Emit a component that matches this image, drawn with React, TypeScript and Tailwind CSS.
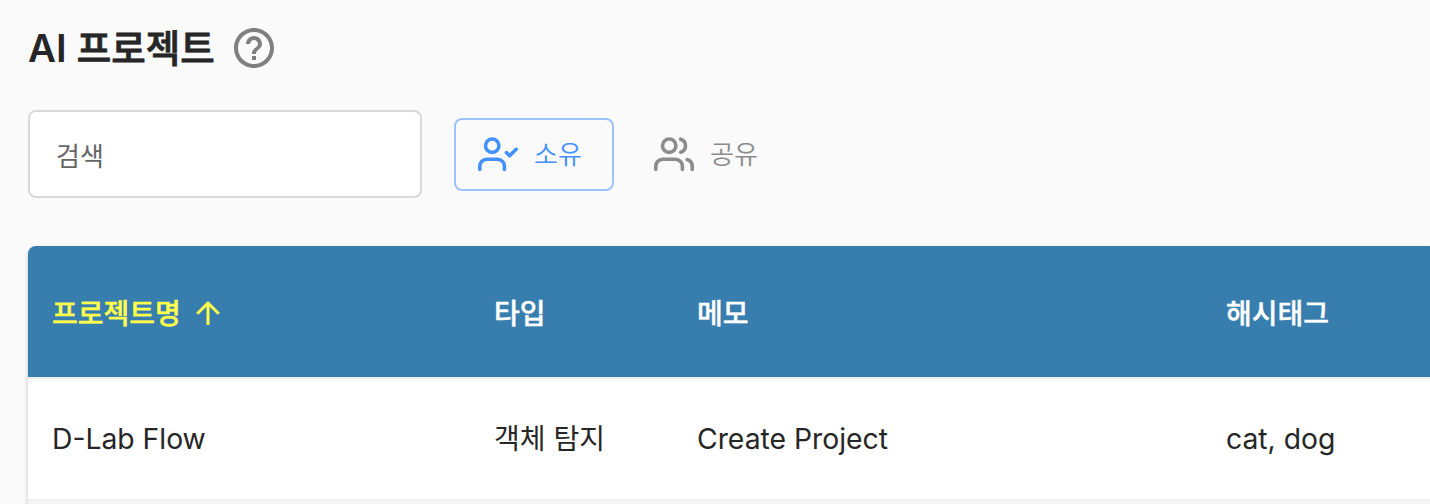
import { MdHelpOutline } from "react-icons/md";

function PersonCheck() {
  return (
    <svg width="40" height="36" viewBox="0 0 40 36" fill="none" stroke="currentColor" strokeWidth="3.6" strokeLinecap="round" strokeLinejoin="round">
      <circle cx="14.2" cy="9.7" r="6.7" />
      <path d="M1.8 33.5v-3.2a7 7 0 0 1 7-7h10.6a7 7 0 0 1 7 7v3.2M28.4 16.6l3.2 3.2 6.6-6.5" />
    </svg>
  );
}

function People() {
  return (
    <svg width="40" height="36" viewBox="0 0 40 36" fill="none" stroke="currentColor" strokeWidth="3.6" strokeLinecap="round" strokeLinejoin="round">
      <circle cx="15.2" cy="9.7" r="6.7" />
      <path d="M1.8 33.5v-3.2a7 7 0 0 1 7-7h12.6a7 7 0 0 1 7 7v3.2M26.7 3.2a6.8 6.8 0 0 1 0 13M38.2 33.5v-3.2a7 7 0 0 0-5-6.8" />
    </svg>
  );
}

function SortArrow() {
  return (
    <svg className="mb-0.5" width="24" height="26" viewBox="0 0 24 26" fill="none" stroke="currentColor" strokeWidth="3">
      <path d="M12 25V3M1.2 13.8 12 3l10.8 10.8" />
    </svg>
  );
}

const columns = "grid grid-cols-[442px_203px_529px_1fr] items-center pl-6";

export default function App() {
  return (
    <div className="h-[504px] w-full overflow-hidden bg-[#fafafa] font-[Inter,'Noto_Sans_CJK_KR',sans-serif] text-[#262626]">
      <header className="flex h-[110px] items-start pl-7 pt-6">
        <h1 className="w-[202px] whitespace-nowrap text-[37.5px] font-medium leading-[49px] [-webkit-text-stroke:0.8px_currentColor]"><span className="text-[38.5px] font-semibold [-webkit-text-stroke:0px]">AI</span> 프로젝트</h1>
        <MdHelpOutline className="size-12 text-[#808080]" />
      </header>
      <div className="flex h-22 items-center pl-7">
        <div className="flex h-22 w-[394px] items-center rounded-lg border-2 border-[#d9d9d9] bg-white pl-[26px] pt-1 text-[26px] text-[#666]">검색</div>
        <button className="ml-8 flex h-[73px] w-40 items-center gap-4 rounded-lg border-2 border-[#9dc3fc] pl-[22px] text-[26px] font-[350] text-[#4391fc]"><PersonCheck />소유</button>
        <button className="ml-10 flex items-center gap-4 text-[26px] font-[350] text-[#8c8c8c]"><People />공유</button>
      </div>
      <main className="ml-7 mt-12 h-[300px] rounded-tl-lg bg-[#f4f4f4] shadow-[0_2px_4px_rgba(0,0,0,0.22)]">
        <div className={columns + " h-[131px] rounded-tl-lg bg-[#377dae] pt-1 text-[28px] font-medium text-white [-webkit-text-stroke:0.4px_currentColor]"}>
          <span className="flex items-center gap-[15px] text-[#ffff4d]">프로젝트명<SortArrow /></span>
          <span>타입</span><span>메모</span><span>해시태그</span>
        </div>
        <div className={columns + " h-[124px] border-y-2 border-[#efefef] bg-white text-[28.3px]"}>
          <span>D-Lab Flow</span><span className="text-[28px]">객체 탐지</span><span>Create Project</span><span>cat, dog</span>
        </div>
      </main>
    </div>
  );
}
